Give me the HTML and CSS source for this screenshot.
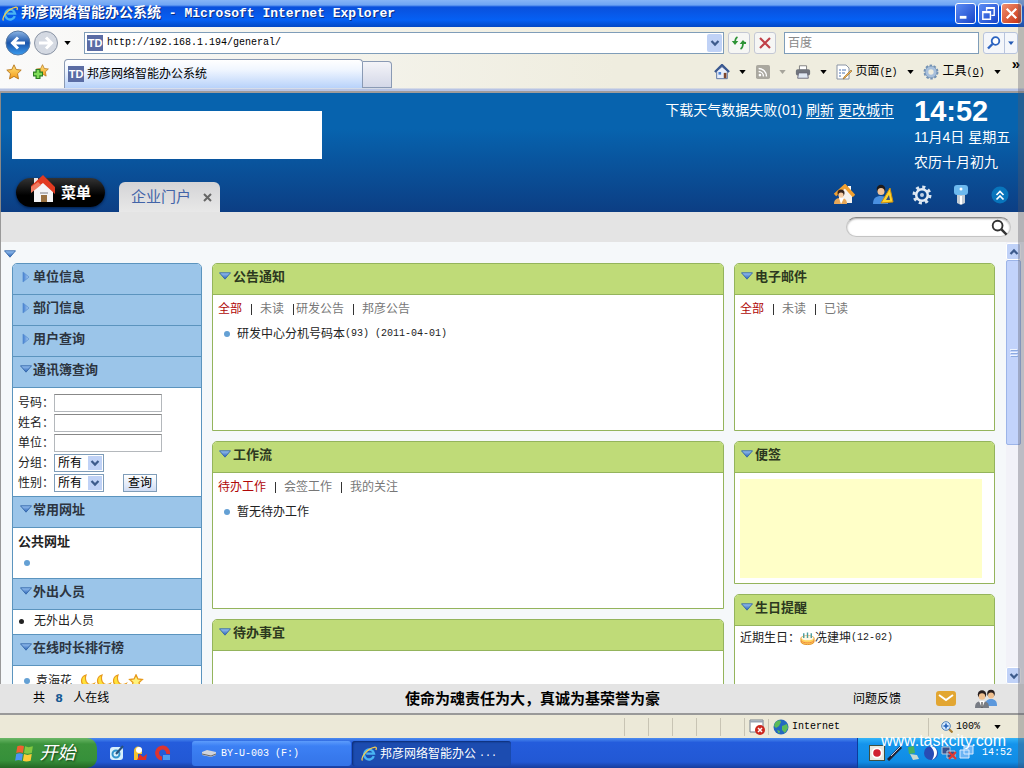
FILE: index.html
```
<!DOCTYPE html>
<html lang="zh-CN">
<head>
<meta charset="utf-8">
<title>邦彦网络智能办公系统</title>
<link rel="stylesheet" href="styles.css">
</head>
<body>
<svg class="defs" aria-hidden="true">
  <defs>
    <linearGradient id="triFill" x1="0" y1="0" x2="0" y2="1"><stop offset="0" stop-color="#9cc6f4"/><stop offset="1" stop-color="#2a62b4"/></linearGradient>
    <linearGradient id="triSide" x1="0" y1="0" x2="1" y2="0"><stop offset="0" stop-color="#3f7cd0"/><stop offset="1" stop-color="#b4d4f6"/></linearGradient>
    <linearGradient id="backFill" x1="0" y1="0" x2="0" y2="1"><stop offset="0" stop-color="#8db5e4"/><stop offset=".5" stop-color="#1b55ab"/><stop offset="1" stop-color="#3a9cf0"/></linearGradient>
    <linearGradient id="starFill" x1="0" y1="0" x2="0" y2="1"><stop offset="0" stop-color="#ffe680"/><stop offset="1" stop-color="#f49a18"/></linearGradient>
  </defs>
  <symbol id="ie" viewBox="0 0 16 16"><path d="M12.8 10.2A5 5 0 1 1 13 7.6H5.2" fill="none" stroke="#48b4f4" stroke-width="2.4"/><path d="M1.5 14.5C-.5 12 5 3 14 1.2c1.800-.2 1.500 1.800.8 2.800" fill="none" stroke="#f2cc50" stroke-width="1.300"/></symbol>
  <symbol id="down" viewBox="0 0 12 8"><path d="M.5.8h11L6 7.200z" fill="url(#triFill)" stroke="#3265a8" stroke-width=".9"/></symbol>
  <symbol id="right" viewBox="0 0 8 12"><path d="M1 1v10l6-5z" fill="url(#triSide)" stroke="#5b90d0" stroke-width=".8"/></symbol>
  <symbol id="chev" viewBox="0 0 10 10"><path d="M1.500 3l3.500 3.600L8.500 3" fill="none" stroke="#3d5b8c" stroke-width="2.200"/></symbol>
  <symbol id="caret" viewBox="0 0 8 5"><path d="M0 0h8L4 5z"/></symbol>
  <symbol id="star" viewBox="0 0 16 16"><path d="M8 .8l2.200 4.700 5 .6-3.700 3.600 1 5.200L8 12.400l-4.500 2.500 1-5.200L.8 6.100l5-.6z" fill="url(#starFill)" stroke="#b5741c" stroke-width=".9"/></symbol>
  <symbol id="moon" viewBox="0 0 16 14"><path d="M6 1C.8 2.500 0 9 4.500 11.800c3.500 2.200 8 .8 9.800-2.300-3 1.500-6.500 1-8-1.800C5.200 5.500 5.300 3 6 1z" fill="#ffe23a" stroke="#e89a1c" stroke-width="1.200"/></symbol>
  <symbol id="lens" viewBox="0 0 18 18"><circle cx="7" cy="7" r="5.200" fill="none" stroke="#333" stroke-width="2"/><path d="M11 11l5.500 5.500" stroke="#333" stroke-width="2.600"/></symbol>
</svg>

<div class="window">
  <header class="titlebar">
    <svg class="i16"><use href="#ie"/></svg>
    <h1><span class="big">邦彦网络智能办公系统</span> - Microsoft Internet Explorer</h1>
    <div class="winbtns">
      <button aria-label="最小化"><svg viewBox="0 0 20 20"><path d="M4 14h7" stroke="#fff" stroke-width="3"/></svg></button>
      <button aria-label="还原"><svg viewBox="0 0 20 20"><path d="M8 7V4h8v8h-3M8 4.500h8" fill="none" stroke="#fff" stroke-width="1.500"/><path d="M4 8h8v8H4zM4 9h8" fill="none" stroke="#fff" stroke-width="1.500"/></svg></button>
      <button class="close" aria-label="关闭"><svg viewBox="0 0 20 20"><path d="M5 5l10 10M15 5L5 15" stroke="#fff" stroke-width="2.400"/></svg></button>
    </div>
  </header>

  <div class="addressbar">
    <button class="nav" aria-label="后退"><svg viewBox="0 0 26 26"><circle cx="13" cy="13" r="12" fill="url(#backFill)" stroke="#587aa4"/><path d="M20 13H8M13 7.500L7.500 13l5.500 5.500" fill="none" stroke="#fff" stroke-width="3"/></svg></button>
    <button class="nav" aria-label="前进"><svg viewBox="0 0 26 26"><circle cx="13" cy="13" r="11.500" fill="#d4d9e2" stroke="#8b95a5"/><path d="M6 13h12M13 7.500l5.500 5.500-5.500 5.500" fill="none" stroke="#fff" stroke-width="3"/></svg></button>
    <svg class="caret nav-caret"><use href="#caret"/></svg>
    <div class="url"><span class="td">TD</span><input type="text" aria-label="地址" value="http://192.168.1.194/general/"><button class="drop" aria-label="展开"><svg><use href="#chev"/></svg></button></div>
    <button class="tool" aria-label="刷新"><svg viewBox="0 0 16 16"><path d="M6.500 2C4.500 3 4 5 4 8M15 8c0 0-3-.500-3.500-.500M9.500 14c2-1 2.500-3 2.500-6" fill="none" stroke="#2d9336" stroke-width="1.800"/><path d="M.8 6h6.500L4 10zM8.700 9h6.500L12 5z" fill="#2d9336"/></svg></button>
    <button class="tool" aria-label="停止"><svg viewBox="0 0 16 16"><path d="M3 3l10 10M13 3L3 13" stroke="#c04048" stroke-width="2.200"/></svg></button>
    <input class="engine" type="text" aria-label="搜索" placeholder="百度">
    <div class="go"><button aria-label="搜索"><svg viewBox="0 0 16 16"><circle cx="9.500" cy="6" r="3.800" fill="#fff" stroke="#2c63c0" stroke-width="1.800"/><path d="M6.500 9L2 13.500" stroke="#2c63c0" stroke-width="2.400"/></svg></button><button class="thin" aria-label="搜索选项"><svg viewBox="0 0 8 5"><use href="#caret" fill="#245ab4"/></svg></button></div>
  </div>

  <div class="tabrow">
    <div class="favs">
      <svg class="i16"><use href="#star"/></svg>
      <svg class="i16" viewBox="0 0 16 16"><use href="#star" x="3" width="13" height="13"/><path d="M5 5v10M0 10h10" stroke="#2b7f22" stroke-width="5"/><path d="M5 6v8M1 10h8" stroke="#7fdc58" stroke-width="2.600"/></svg>
    </div>
    <div class="tab"><span class="td">TD</span>邦彦网络智能办公系统</div>
    <div class="newtab"></div>
    <div class="commands">
      <svg class="i16" viewBox="0 0 18 18"><path d="M3 8v8.500h12V8L9 3z" fill="#e8eefa" stroke="#506a9c"/><path d="M1 9l8-8 8 8" fill="none" stroke="#3a5890" stroke-width="2.400"/><path d="M11 10h3v6h-3z" fill="#7d452b"/><path d="M5 9h3v3H5z" fill="#4c82d4"/></svg>
      <svg class="caret"><use href="#caret"/></svg>
      <svg class="i14 rss" viewBox="0 0 16 16"><rect width="16" height="16" rx="2" fill="#aaa89f"/><circle cx="4.500" cy="11.500" r="1.500" fill="#fff"/><path d="M3 7.500a5.500 5.500 0 0 1 5.500 5.500M3 4a9 9 0 0 1 9 9" fill="none" stroke="#fff" stroke-width="1.600"/></svg>
      <svg class="caret dim"><use href="#caret"/></svg>
      <svg class="i16" viewBox="0 0 18 18"><path d="M5 2h8v5H5z" fill="#fff" stroke="#777"/><rect x="1" y="6" width="16" height="7" rx="2" fill="#70747c"/><path d="M4 10h10l1 6H3z" fill="#dfe7f2" stroke="#667"/></svg>
      <svg class="caret"><use href="#caret"/></svg>
      <svg class="i16" viewBox="0 0 16 16"><path d="M1 1h9l3 3v11H1z" fill="#fff" stroke="#8a94a4"/><path d="M3 6h2M3 9h2M3 12h2M6 6h4M6 9h3" stroke="#4c74b4"/><path d="M15 6l-7 7-1 2 2-1 7-7z" fill="#f0b050" stroke="#8c6428" stroke-width=".6"/></svg>
      <a href="#">页面<span class="lat">(<u>P</u>)</span></a>
      <svg class="caret"><use href="#caret"/></svg>
      <svg class="i16" viewBox="0 0 18 18"><circle cx="9" cy="9" r="7.200" fill="none" stroke="#7492b4" stroke-width="2.400" stroke-dasharray="2.800 1.700"/><circle cx="9" cy="9" r="4.800" fill="none" stroke="#a8c0dc" stroke-width="3.600"/><circle cx="9" cy="9" r="6.600" fill="none" stroke="#7492b4" stroke-width=".8"/></svg>
      <a href="#">工具<span class="lat">(<u>O</u>)</span></a>
      <svg class="caret"><use href="#caret"/></svg>
      <span class="more">»</span>
    </div>
  </div>

  <div class="banner">
    <div class="banner-left">
      <div class="logo"></div>
      <div class="apptabs">
        <button class="menu"><svg viewBox="0 0 26 28"><path d="M4 3h4v8H4z" fill="#e6e6ea"/><path d="M4 14v13h19V14l-9-8z" fill="#f4f4f6"/><path d="M11 20h6v7h-6z" fill="#987040"/><path d="M10 17h8v2h-8z" fill="#b8b8bc"/><path d="M1 17v-6L13 0l12 12v7L13 8z" fill="#e23a20"/><path d="M1 18v-6l7-5 3 3z" fill="#f07a60"/></svg>菜单</button>
        <div class="apptab">企业门户 <button aria-label="关闭标签"><svg viewBox="0 0 9 9"><path d="M1 1l7 7M8 1L1 8" stroke="#666" stroke-width="2"/></svg></button></div>
      </div>
    </div>
    <div class="banner-right">
      <p class="weather">下载天气数据失败(01) <a href="#">刷新</a> <a href="#">更改城市</a></p>
      <div class="clock"><strong>14:52</strong><span>11月4日 星期五</span><span>农历十月初九</span></div>
      <div class="quick">
        <svg viewBox="0 0 22 22"><path d="M6 9v10h13V9l-6-6z" fill="#f4f2ee"/><path d="M15 2h3v6h-3z" fill="#fff"/><path d="M2 11l10-9 9 10" fill="none" stroke="#f0a030" stroke-width="3.500"/><circle cx="8" cy="9" r="3.500" fill="#35241c"/><circle cx="8" cy="11" r="2.600" fill="#f6cda4"/><path d="M1 20c0-5 3-6 7-6s6 2 6 6z" fill="#e8a858"/><path d="M6 14l2 6 3-6z" fill="#fff"/></svg>
        <svg viewBox="0 0 22 22"><circle cx="9" cy="5" r="4.300" fill="#1e1a1a"/><circle cx="9" cy="7.500" r="3.500" fill="#f0c49a"/><path d="M1 20c0-6 3-8 8-8s7 3 7 8z" fill="#4a90e0"/><path d="M9 19L18 4l3 14z" fill="#ffd42c" stroke="#c88c10"/><path d="M14 16l3-5 1 5z" fill="#35507c"/></svg>
        <svg viewBox="0 0 22 22"><circle cx="11" cy="11" r="8" fill="none" stroke="#dce6f0" stroke-width="3" stroke-dasharray="3.100 3.180"/><circle cx="11" cy="11" r="5.800" fill="none" stroke="#e4ebf4" stroke-width="2.500"/><circle cx="11" cy="11" r="2" fill="#c0d0e4"/></svg>
        <svg viewBox="0 0 22 22"><rect x="4" y="1" width="14" height="10" rx="3" fill="#6db9ee"/><path d="M7 11h8v8l-4 2-4-2z" fill="#c4ccd4"/><path d="M11 12v8" stroke="#fff" stroke-width="2"/><circle cx="11" cy="5" r="1.500" fill="#fff"/></svg>
        <svg viewBox="0 0 22 22"><circle cx="11" cy="11" r="8.500" fill="#0875bc"/><path d="M7.500 11L11 7.500l3.500 3.500M7.500 15.500L11 12l3.500 3.500" fill="none" stroke="#fff" stroke-width="1.700"/></svg>
      </div>
    </div>
  </div>

  <div class="searchbar"><div class="search"><input type="text" aria-label="站内搜索"><button aria-label="查找"><svg><use href="#lens"/></svg></button></div></div>

  <main class="content">
    <div class="desk">
      <button class="fold" aria-label="折叠"><svg><use href="#down"/></svg></button>
      <div class="columns">
        <aside class="side">
          <h2><svg class="tri-r"><use href="#right"/></svg>单位信息</h2>
          <h2><svg class="tri-r"><use href="#right"/></svg>部门信息</h2>
          <h2><svg class="tri-r"><use href="#right"/></svg>用户查询</h2>
          <h2><svg class="tri"><use href="#down"/></svg>通讯簿查询</h2>
          <form class="lookup">
            <label for="num">号码：</label><input id="num" type="text">
            <label for="nm">姓名：</label><input id="nm" type="text">
            <label for="un">单位：</label><input id="un" type="text">
            <label for="grp">分组：</label><div class="pick"><select id="grp"><option>所有</option></select><svg><use href="#chev"/></svg></div>
            <label for="sex">性别：</label><div class="lastrow"><div class="pick"><select id="sex"><option>所有</option></select><svg><use href="#chev"/></svg></div><button type="button">查询</button></div>
          </form>
          <h2><svg class="tri"><use href="#down"/></svg>常用网址</h2>
          <div class="sites"><b>公共网址</b><span class="dot"></span></div>
          <h2><svg class="tri"><use href="#down"/></svg>外出人员</h2>
          <div class="out"><span class="dot dark"></span>无外出人员</div>
          <h2><svg class="tri"><use href="#down"/></svg>在线时长排行榜</h2>
          <div class="rank"><span class="dot"></span><span class="who">袁海花</span><svg><use href="#moon"/></svg><svg><use href="#moon"/></svg><svg><use href="#moon"/></svg><svg viewBox="0 0 16 16"><path d="M8 1l2.200 4.700 5 .6-3.700 3.300 1 5L8 12.200l-4.500 2.400 1-5L.8 6.300l5-.6z" fill="#fff27a" stroke="#e89a1c" stroke-width="1.500"/></svg></div>
        </aside>

        <div class="stack">
          <section class="panel tall">
            <h2><svg class="tri"><use href="#down"/></svg>公告通知</h2>
            <nav><a class="on" href="#">全部</a><i></i><a href="#">未读</a><i class="tight"></i><a href="#">研发公告</a><i></i><a href="#">邦彦公告</a></nav>
            <p class="item"><span class="dot"></span>研发中心分机号码本<span class="lat">(93) (2011-04-01)</span></p>
          </section>
          <section class="panel tall">
            <h2><svg class="tri"><use href="#down"/></svg>工作流</h2>
            <nav><a class="on" href="#">待办工作</a><i></i><a href="#">会签工作</a><i></i><a href="#">我的关注</a></nav>
            <p class="item"><span class="dot"></span>暂无待办工作</p>
          </section>
          <section class="panel tall"><h2><svg class="tri"><use href="#down"/></svg>待办事宜</h2></section>
        </div>

        <div class="stack">
          <section class="panel tall">
            <h2><svg class="tri"><use href="#down"/></svg>电子邮件</h2>
            <nav><a class="on" href="#">全部</a><i></i><a href="#">未读</a><i></i><a href="#">已读</a></nav>
          </section>
          <section class="panel memo">
            <h2><svg class="tri"><use href="#down"/></svg>便签</h2>
            <textarea aria-label="便签"></textarea>
          </section>
          <section class="panel tall">
            <h2><svg class="tri"><use href="#down"/></svg>生日提醒</h2>
            <p class="bday">近期生日：<svg viewBox="0 0 16 16"><path d="M1 8c0-3 14-3 14 0v4c0 4-14 4-14 0z" fill="#ffd35a" stroke="#e09028"/><ellipse cx="8" cy="8" rx="6.500" ry="2.500" fill="#fff8e4"/><path d="M1 11c3 3 11 3 14 0" stroke="#f08040" fill="none"/><path d="M4 3v5M8 2v6M12 3v5" stroke="#4a9c9c" stroke-width="1.500"/></svg>冼建坤<span class="lat">(12-02)</span></p>
          </section>
        </div>
      </div>
    </div>
    <div class="scroll">
      <button aria-label="向上"><svg class="up"><use href="#chev"/></svg></button>
      <div class="thumb"><svg viewBox="0 0 8 10"><path d="M0 1.500h7M0 4.500h7M0 7.500h7" stroke="#eef4ff"/><path d="M1 2.500h7M1 5.500h7M1 8.500h7" stroke="#8caae0"/></svg></div>
      <button aria-label="向下"><svg><use href="#chev"/></svg></button>
    </div>
  </main>

  <footer class="footer">
    <p class="online">共 <b>8</b> 人在线</p>
    <p class="motto">使命为魂责任为大，真诚为基荣誉为豪</p>
    <div class="feedback"><a href="#">问题反馈</a>
      <svg class="mail" viewBox="0 0 20 15"><rect width="20" height="15" rx="3" fill="#e2a632"/><path d="M3 4l7 5 7-5" fill="none" stroke="#fff" stroke-width="2"/></svg>
      <svg class="people" viewBox="0 0 24 20"><circle cx="17" cy="4.500" r="3.800" fill="#2a2020"/><circle cx="17" cy="6.500" r="3" fill="#f0c090"/><path d="M11 17c0-5 2-7 6-7s6 2 6 7z" fill="#5c98dc"/><circle cx="8" cy="5.500" r="4.200" fill="#2a2020"/><circle cx="8" cy="7.500" r="3.200" fill="#f0c090"/><path d="M1 19c0-5 2-7 7-7s7 2 7 7z" fill="#777c84"/><path d="M5 12l3 7 3-7z" fill="#fff"/><path d="M8 13v6" stroke="#444" stroke-width="1.200"/></svg>
    </div>
  </footer>

  <div class="status">
    <span class="cell"></span><span class="cell"></span><span class="cell"></span><span class="cell"></span><span class="cell"></span>
    <span class="cell"><svg class="i16" viewBox="0 0 16 16"><path d="M1 1h13v12H1z" fill="#fff" stroke="#77808c"/><path d="M1 2.500h13" stroke="#9aa4b4" stroke-width="2"/><circle cx="11" cy="11" r="5" fill="#cc2820"/><path d="M9 9l4 4M13 9l-4 4" stroke="#fff" stroke-width="1.500"/></svg></span>
    <span class="zone"><svg class="i16" viewBox="0 0 16 16"><circle cx="8" cy="8" r="7.500" fill="#2468c0"/><path d="M2 4c3-4 6-3 6-1L6 7 3 9 1 7zM9 7l5-2 1 4-3 5-3-3zM4 11l3 1-1 3z" fill="#5cbc58"/></svg>Internet</span>
    <span class="zoom"><svg class="i12" viewBox="0 0 12 12"><path d="M7.500 7.500l4 4" stroke="#a87c30" stroke-width="2.200"/><circle cx="5" cy="5" r="4.300" fill="#d8ecff" stroke="#4c80b8"/><path d="M5 2.500v5M2.500 5h5" stroke="#2060b8" stroke-width="1.600"/></svg>100%<svg class="caret"><use href="#caret"/></svg></span>
  </div>

  <div class="taskbar">
    <button class="start"><svg viewBox="0 0 18 18"><path d="M3 3c2-1 4-1 6 0L8 9C6 8 4 8 2 9z" fill="#f06030"/><path d="M10 3c2 1 4 1 7 0l-1 6c-3 1-5 1-7 0z" fill="#84c840"/><path d="M2 10c2-1 4-1 6 0l-1 6c-2-1-4-1-6 0z" fill="#4c94f4"/><path d="M9 10c2 1 4 1 7 0l-1 6c-3 1-5 1-7 0z" fill="#fccc38"/></svg>开始</button>
    <div class="launch">
      <svg class="i16" viewBox="0 0 16 16"><rect x="1" y="2" width="13" height="13" rx="3" fill="#d8f0fc"/><circle cx="7" cy="9" r="3.500" fill="none" stroke="#3094cc" stroke-width="2"/><path d="M7 9l7-8" stroke="#28527c" stroke-width="2"/></svg>
      <svg class="i16" viewBox="0 0 16 16"><path d="M2 15V6c0-6 8-6 8 0v3H6v6z" fill="#f4c430"/><circle cx="7" cy="5" r="3" fill="#fff"/><path d="M5 15l3-6 3 3 4-3-1 6z" fill="#e03024"/></svg>
      <svg class="i16" viewBox="0 0 16 16"><path d="M13 9A5.500 5.500 0 1 0 7 13.500" fill="none" stroke="#dc3430" stroke-width="4"/><path d="M8 10h7v5H8z" fill="#4c9cf0"/></svg>
    </div>
    <button class="task"><svg class="i16" viewBox="0 0 16 16"><path d="M1 6l5-2 9 2v3l-5 2-9-2z" fill="#d0d4dc"/><path d="M1 8l9 2 5-2" stroke="#666" fill="none"/></svg><span class="lat">BY-U-003 (F:)</span></button>
    <button class="task active"><svg class="i16"><use href="#ie"/></svg>邦彦网络智能办公<span class="lat">...</span></button>
    <div class="tray">
      <svg class="i16" viewBox="0 0 16 16"><rect x=".5" y=".5" width="15" height="15" fill="#e8e8e0" stroke="#405040"/><circle cx="8" cy="8" r="5.500" fill="#fff"/><circle cx="8" cy="8" r="3.800" fill="#d02030"/></svg>
      <svg class="i16" viewBox="0 0 16 16"><path d="M1 15L14 2" stroke="#223" stroke-width="3"/><path d="M4 11L14 1" stroke="#ccd"/></svg>
      <svg class="i16" viewBox="0 0 16 16"><path d="M3 2l6-1 1 7-6 1z" fill="#48b060"/><path d="M5 9l7 1 2 4-6 1z" fill="#c8d8d0"/></svg>
      <svg class="i16" viewBox="0 0 16 16"><circle cx="8" cy="8" r="7" fill="#284cb4"/><path d="M7 1c9 0 9 11 2 14 3-5 3-9-2-14z" fill="#fff"/></svg>
      <svg class="i16" viewBox="0 0 16 16"><path d="M1 2h8v7H1zM6 6h8v7H6z" fill="#38508c" stroke="#bcd"/><path d="M8 7l7 7M15 7l-7 7" stroke="#e03830" stroke-width="2"/></svg>
      <svg class="i16" viewBox="0 0 16 16"><path d="M5 1h9v8H5zM1 5h9v8H1z" fill="#6cb4f4" stroke="#dcecff"/></svg>
      <time>14:52</time>
    </div>
    <span class="mark">www.taskcity.com</span>
  </div>
  <div class="edge"></div>
</div>
</body>
</html>
```
FILE: styles.css
```
* { box-sizing: border-box; }
body, h1, h2, p { margin: 0; }
body { font: 12px/16px "Liberation Sans", "Noto Sans CJK SC", sans-serif; color: #222; }
button, input, select, textarea { font: inherit; color: inherit; margin: 0; padding: 0; border: 0; background: none; outline: 0; }
button { display: flex; align-items: center; justify-content: center; }
svg { display: block; flex: none; }
a { color: inherit; text-decoration: none; }
.defs { position: absolute; width: 0; height: 0; }
.i12 { width: 12px; height: 12px; }
.i14 { width: 14px; height: 14px; }
.i16 { width: 16px; height: 16px; }
.caret { width: 7px; height: 4px; }
.dim { opacity: .3; }
.lat { font-family: "Liberation Mono", "Noto Sans CJK SC", monospace; font-size: 10px; white-space: pre; }
.window { position: relative; display: flex; flex-direction: column; height: 100vh; overflow: hidden; background: #efeddf; }
.edge { position: absolute; top: 0; right: 0; bottom: 0; width: 6px; background: rgba(90, 90, 100, .35); pointer-events: none; }

.titlebar { display: flex; align-items: center; gap: 3px; height: 27px; padding: 0 2px; flex: none; background: linear-gradient(#86b4f6 0, #6ea4f4 5px, #0a50dc 7px, #0560f4 20px, #0348c4); color: #fff; }
.titlebar h1 { flex: 1; font: bold 13px/20px "Liberation Mono", "Noto Sans CJK SC", monospace; text-shadow: 1px 1px #0a2c80; white-space: nowrap; }
.titlebar .big { font-size: 14px; }
.winbtns { display: flex; gap: 2px; }
.winbtns button { width: 21px; height: 21px; border: 1px solid #fff; border-radius: 3px; background: linear-gradient(135deg, #5c8cf4, #1844c8); }
.winbtns .close { background: linear-gradient(135deg, #f09070, #c83010); }
.winbtns svg { width: 19px; height: 19px; }

.addressbar { display: flex; align-items: center; height: 31px; flex: none; padding: 0 6px 0 4px; background: linear-gradient(90deg, #fafafa, #efeddf 60%); }
.nav { width: 28px; }
.nav svg { width: 26px; height: 26px; }
.nav-caret { margin: 0 13px 0 4px; }
.url { display: flex; align-items: center; flex: 1; gap: 4px; height: 22px; padding: 1px 1px 1px 2px; border: 1px solid #7f9db9; background: #fff; }
.url input { flex: 1; min-width: 0; font: 10px/16px "Liberation Mono", monospace; color: #000; }
.td { width: 16px; height: 16px; flex: none; background: #5a6ca4; color: #fff; font: bold 11px/16px "Liberation Sans", sans-serif; text-align: center; }
.drop { width: 15px; height: 18px; background: #c0d2f6; border-radius: 2px; }
.drop svg { width: 10px; height: 10px; }
.tool { width: 22px; height: 22px; margin-left: 4px; border: 1px solid #c4c8d4; border-radius: 3px; background: #f6f6f4; }
.tool svg { width: 16px; height: 16px; }
.engine { width: 195px; height: 22px; margin: 0 4px 0 8px; padding: 0 3px; border: 1px solid #7f9db9; background: #fff; }
.engine::placeholder { color: #888; opacity: 1; }
.go { display: flex; height: 22px; border: 1px solid #b8c4dc; border-radius: 3px; background: #f4f6fa; }
.go button { width: 20px; }
.go .thin { width: 13px; border-left: 1px solid #b8c4dc; }
.go svg { width: 16px; height: 16px; }
.go .thin svg { width: 6px; height: 4px; }

.tabrow { display: flex; align-items: flex-end; height: 35px; flex: none; border-bottom: 2px solid #a09c9c; padding-bottom: 3px; background: linear-gradient(#0000 30px, #b8c4e4 31px), linear-gradient(90deg, #fafafa, #efeddf 60%); }
.favs { display: flex; gap: 11px; width: 64px; padding: 0 0 8px 6px; }
.tab { display: flex; align-items: center; gap: 3px; flex: 0 1 299px; height: 29px; padding: 0 3px; border: 1px solid #8a9ab4; border-bottom: 0; border-radius: 4px 4px 0 0; background: linear-gradient(#fff, #f0f6ff 35%, #b8d2fa); color: #000; white-space: nowrap; }
.newtab { width: 29px; height: 27px; border: 1px solid #8a9ab4; border-left: 0; border-radius: 0 4px 0 0; background: linear-gradient(#f4f4f8, #d4d8e8); }
.commands { display: flex; align-items: center; justify-content: flex-end; gap: 9px; flex: 1; padding: 0 4px 7px 0; color: #000; white-space: nowrap; }
.commands a { margin: 0 0 0 -5px; }
.rss { margin-left: 1px; }
.more { margin: -16px 0 0 2px; font-weight: bold; font-size: 15px; }

.banner { display: flex; justify-content: space-between; height: 119px; flex: none; padding: 0 5px 0 11px; background: linear-gradient(#0763ae 30%, #0c3e84); border-left: 1px solid #888; color: #fff; }
.banner-left { display: flex; flex-direction: column; justify-content: space-between; padding-top: 18px; }
.logo { width: 310px; height: 48px; background: #fff; }
.apptabs { display: flex; align-items: flex-end; gap: 14px; padding-left: 4px; }
.menu { gap: 5px; width: 89px; height: 29px; margin-bottom: 5px; padding: 0 10px; border-radius: 15px; background: linear-gradient(#333, #000 60%); box-shadow: 0 1px 3px #001c48; font-weight: bold; font-size: 15px; white-space: nowrap; }
.menu svg { width: 26px; height: 28px; margin-top: -8px; }
.apptab { display: flex; align-items: center; gap: 12px; width: 101px; height: 30px; padding-left: 12px; border-radius: 6px 6px 0 0; background: linear-gradient(#d4d4d6, #e8e8e8); color: #4264a8; font-size: 15px; white-space: nowrap; }
.apptab svg { width: 9px; height: 9px; }
.banner-right { display: grid; grid-template-columns: auto auto; grid-template-rows: 86px auto; column-gap: 20px; font-size: 14px; }
.weather { padding-top: 7px; line-height: 20px; }
.weather a { border-bottom: 1px solid #fff; }
.clock { display: flex; flex-direction: column; width: 105px; white-space: nowrap; }
.clock strong { font-size: 29px; line-height: 36px; }
.clock span { line-height: 25px; margin-top: -4px; }
.clock span + span { margin-top: 0; }
.quick { grid-column: 1 / 3; display: flex; justify-content: flex-end; gap: 17px; padding: 5px 8px 0 0; }
.quick svg { width: 22px; height: 22px; }

.searchbar { display: flex; justify-content: flex-end; align-items: center; height: 30px; flex: none; padding-right: 13px; background: #e4e4e4; border-left: 1px solid #999; }
.search { display: flex; align-items: center; width: 165px; height: 20px; padding: 0 2px 0 10px; border: 1px solid #c4c4c4; border-top-color: #888; border-radius: 10px; background: #fff; box-shadow: inset 0 1px 2px #aaa; }
.search input { flex: 1; min-width: 0; }
.search svg { width: 17px; height: 17px; }

.content { display: flex; flex: 1; min-height: 0; background: #f5f8fa; border-left: 1px solid #999; }
.desk { flex: 1; overflow: hidden; padding: 8px 11px 0 3px; }
.fold svg { width: 12px; height: 8px; }
.columns { display: grid; grid-template-columns: 190px 512fr 261fr; gap: 10px; padding: 5px 0 0 8px; }
.tri { width: 12px; height: 8px; margin-bottom: 3px; }
.tri-r { width: 8px; height: 12px; margin: 0 2px; }
.side, .panel { border: 1px solid #5b94be; border-radius: 5px 5px 0 0; background: #fff; overflow: hidden; }
h2 { display: flex; align-items: center; gap: 1px; height: 31px; padding: 0 7px 4px; font-size: 13px; line-height: 20px; color: #2c3440; background: #9bc5e9; border-bottom: 1px solid #5b94be; }
.side div + h2, .side form + h2 { border-top: 1px solid #5b94be; height: 32px; }
.lookup { display: grid; grid-template-columns: 36px 1fr; grid-auto-rows: 18px; row-gap: 2px; align-items: center; height: 108px; padding: 6px 5px 0; }
.lookup input { width: 108px; height: 18px; border: 1px solid #b4b8bc; border-top-color: #888; }
.pick { position: relative; width: 50px; height: 18px; }
.pick select { appearance: none; display: block; width: 100%; height: 18px; padding-left: 3px; border: 1px solid #7f9db9; background: #fff; line-height: 16px; color: #000; }
.pick svg { position: absolute; right: 2px; top: 2px; width: 14px; height: 14px; padding: 2px; background: #c0d2f6; pointer-events: none; }
.lastrow { display: flex; gap: 19px; }
.lastrow button { width: 34px; height: 18px; border: 1px solid #7f9db9; background: linear-gradient(#fff, #d0ddf4); color: #000; }
.dot { display: inline-block; width: 6px; height: 6px; flex: none; border-radius: 50%; background: #64a0d4; }
.dark { width: 5px; height: 5px; background: #222; }
.sites { display: flex; flex-direction: column; height: 50px; padding: 6px 5px; font-size: 13px; }
.sites .dot { margin: 10px 0 0 6px; }
.out { display: flex; align-items: center; gap: 10px; height: 24px; padding: 0 6px 2px; }
.rank { display: flex; align-items: center; height: 29px; padding-left: 11px; }
.rank .who { margin: 0 8px 0 6px; }
.rank svg { width: 16px; height: 14px; }

.stack { display: flex; flex-direction: column; gap: 10px; }
.panel { border-color: #94b45c; }
.panel h2 { padding-left: 6px; gap: 2px; background: #bfdb78; border-color: #94b45c; color: #2c3820; }
.tall { height: 168px; }
.memo { height: 143px; }
.memo textarea { display: block; width: calc(100% - 17px); height: 99px; margin: 6px 5px; background: #ffffc8; resize: none; }
nav { display: flex; align-items: center; height: 28px; padding: 0 5px; color: #777; }
nav .on { color: #b00808; }
nav i { width: 1px; height: 11px; margin: 0 8px 0 9px; background: #333; }
nav .tight { margin-right: 2px; }
.item { display: flex; align-items: center; padding: 3px 11px; }
.item .dot { margin-right: 7px; }
.bday { display: flex; align-items: center; padding: 4px 5px; }
.bday svg { width: 15px; height: 16px; }

.scroll { display: flex; flex-direction: column; width: 18px; padding: 1px 3px 0 0; background: #f2f2f8; }
.scroll button { width: 15px; height: 17px; border: 1px solid #fff; border-radius: 2px; background: #c0d2f8; }
.scroll button svg { width: 10px; height: 10px; }
.scroll button:last-child { margin-top: auto; }
.scroll .up { transform: rotate(180deg); }
.thumb { display: flex; align-items: center; justify-content: center; height: 42%; border: 1px solid #9cb4e8; border-radius: 2px; background: #c2d3fb; }
.thumb svg { width: 8px; height: 10px; }

.footer { display: grid; grid-template-columns: 11fr auto 10fr; align-items: center; height: 31px; flex: none; padding: 0 26px 0 33px; border-bottom: 2px solid #999; background: #e4e4e4; color: #000; }
.online b { margin: 0 7px; color: #165a94; font-family: "DejaVu Sans", sans-serif; font-size: 11px; }
.motto { font-weight: bold; font-size: 15px; line-height: 20px; }
.feedback { display: flex; align-items: center; justify-content: flex-end; }
.mail { width: 20px; height: 15px; margin: 0 18px 0 35px; }
.people { width: 24px; height: 20px; }

.status { display: flex; align-items: center; height: 23px; flex: none; padding: 2px 20px 2px 0; justify-content: flex-end; background: #ece9d8; color: #000; font: 10px/16px "Liberation Mono", monospace; }
.cell { width: 24px; height: 18px; padding: 1px 4px; border-left: 1px solid #c8c4b4; }
.zone { display: flex; align-items: center; gap: 3px; width: 160px; padding-left: 4px; border-left: 1px solid #c8c4b4; }
.zoom { display: flex; align-items: center; gap: 3px; width: 76px; height: 18px; padding-left: 12px; border-left: 1px solid #c8c4b4; }
.zoom .caret { margin: 0 3px 0 auto; }

.taskbar { position: relative; display: flex; align-items: stretch; height: 30px; flex: none; background: linear-gradient(#4c8cf0, #245cdc 15%, #2258d4 80%, #183c9c); color: #fff; }
.start { width: 97px; gap: 6px; padding-right: 8px; border-radius: 0 10px 10px 0; background: linear-gradient(#6cb868, #3c943c 20%, #36903a 75%, #246824); font-style: italic; font-size: 18px; text-shadow: 1px 1px 2px #143c14; }
.start svg { width: 20px; height: 20px; }
.launch { display: flex; align-items: center; gap: 7px; width: 95px; padding-left: 12px; }
.task { justify-content: flex-start; gap: 4px; width: 159px; margin: 3px 1px 2px 0; padding-left: 9px; border-radius: 3px; background: linear-gradient(#5c9cfc, #3c80f4 20%, #3474e8); white-space: nowrap; }
.active { gap: 3px; background: #1c4cb0; box-shadow: inset 1px 1px 2px #0c2c74; }
.tray { display: flex; align-items: center; gap: 2px; width: 167px; margin-left: auto; padding-left: 11px; border-left: 1px solid #0c3c9c; background: linear-gradient(#34b4f8, #1494ec 20%, #108ce4 80%, #0c64b4); }
.tray time { margin-left: 5px; font: 10px/16px "Liberation Mono", monospace; }
.mark { position: absolute; right: 18px; top: -6px; font-size: 16px; line-height: 18px; color: #fff; }
```
